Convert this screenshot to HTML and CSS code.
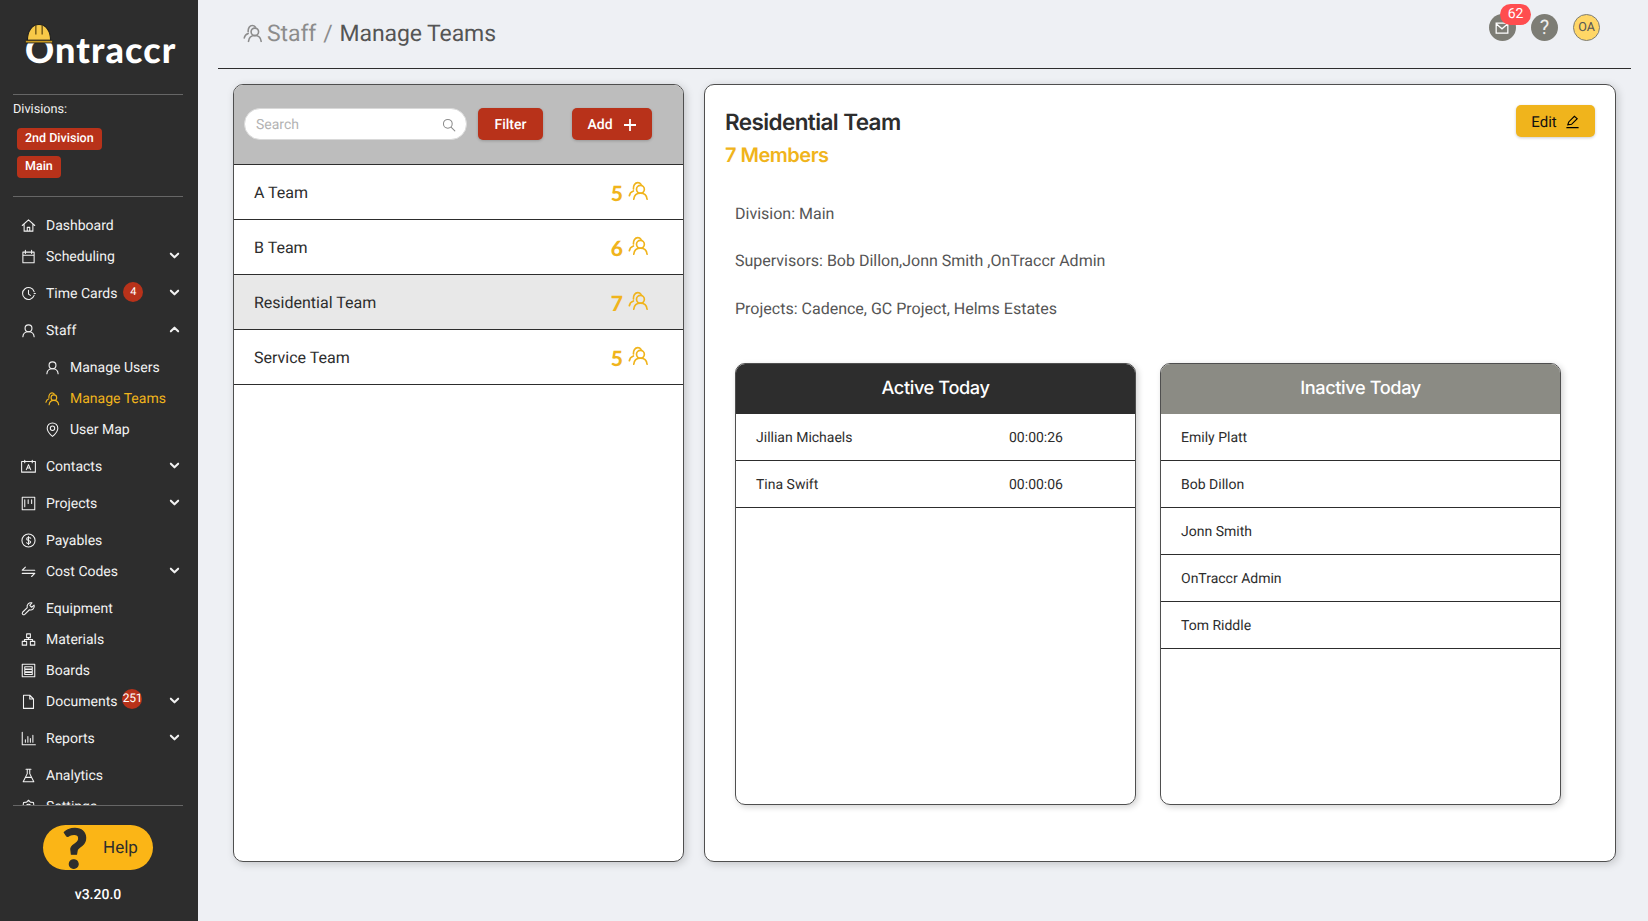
FILE: index.html
```html
<!DOCTYPE html>
<html lang="en">
<head>
<meta charset="utf-8">
<title>Ontraccr - Manage Teams</title>
<link rel="stylesheet" href="styles.css">
</head>
<body>
<svg class="defs" width="0" height="0" aria-hidden="true">
  <symbol id="i-team" viewBox="0 0 24 24" fill="none" stroke="currentColor" stroke-width="1.900" stroke-linecap="round">
    <circle cx="14.200" cy="10.600" r="4.500"/>
    <path d="M6.600 22c.4-4.400 3.200-7 7.600-7s7.200 2.600 7.600 7"/>
    <path d="M6.200 10.300c-.3-4 1.900-7.300 5-7.300 1.500 0 2.800.7 3.700 2"/>
    <path d="M1.500 18c.4-2.600 2-4.500 4.700-5.500"/>
  </symbol>
  <symbol id="i-user" viewBox="0 0 24 24" fill="none" stroke="currentColor" stroke-width="1.800" stroke-linecap="round">
    <circle cx="12" cy="8.500" r="5.500"/>
    <path d="M3 22c.4-5 3.800-8 9-8s8.600 3 9 8"/>
  </symbol>
  <symbol id="i-chev" viewBox="0 0 12 12" fill="none" stroke="currentColor" stroke-width="2.200" stroke-linecap="round" stroke-linejoin="round">
    <path d="M2 4l4 4 4-4"/>
  </symbol>
</svg>
<div class="app">
  <aside class="sidebar">
    <div class="logo">
      <svg class="helmet" viewBox="0 0 28 20" aria-hidden="true">
        <path d="M3 16.500C3 7.500 7.500 1.500 14 1.500S25 7.500 25 16.500z" fill="#f7c948" stroke="#1f1f1f" stroke-width="1"/>
        <path d="M11 2v9M17 2v9" stroke="#5f4a12" stroke-width="1.200"/>
        <path d="M1 16.500h26v2.500H1z" fill="#c89a22" stroke="#1f1f1f" stroke-width=".8"/>
      </svg>
      <span class="logo-text">Ontraccr</span>
    </div>
    <div class="divisions">
      <div class="divisions-label">Divisions:</div>
      <span class="tag">2nd Division</span>
      <span class="tag">Main</span>
    </div>
    <nav class="nav">
      <a class="item"><svg class="ico" viewBox="0 0 24 24"><path d="M2 12 12 3l10 9M5 10v11h14V10M10 21v-6h4v6"/></svg><span>Dashboard</span></a>
      <a class="item sub"><svg class="ico" viewBox="0 0 24 24"><path d="M3 5h18v17H3zM3 10h18M7 2v5M17 2v5"/></svg><span>Scheduling</span><svg class="chev"><use href="#i-chev"/></svg></a>
      <a class="item sub"><svg class="ico" viewBox="0 0 24 24"><path d="M21 9a9.500 9.500 0 1 0 0 6M12 7v6l3 2M21 12h2"/></svg><span>Time Cards</span><b class="count">4</b><svg class="chev"><use href="#i-chev"/></svg></a>
      <a class="item sub"><svg class="ico"><use href="#i-user"/></svg><span>Staff</span><svg class="chev up"><use href="#i-chev"/></svg></a>
      <div class="submenu">
        <a class="item child"><svg class="ico"><use href="#i-user"/></svg><span>Manage Users</span></a>
        <a class="item child active"><svg class="ico"><use href="#i-team"/></svg><span>Manage Teams</span></a>
        <a class="item child"><svg class="ico" viewBox="0 0 24 24"><path d="M12 23C6 18 3.500 14 3.500 10a8.500 8.500 0 0 1 17 0c0 4-2.500 8-8.500 13z"/><circle cx="12" cy="10" r="3.500"/></svg><span>User Map</span></a>
      </div>
      <a class="item sub"><svg class="ico" viewBox="0 0 24 24"><path d="M1 4h22v17H1zM6 2v4M18 2v4M8.500 17 12 9l3.500 8M10 14.500h4"/></svg><span>Contacts</span><svg class="chev"><use href="#i-chev"/></svg></a>
      <a class="item sub"><svg class="ico" viewBox="0 0 24 24"><path d="M2 2h20v20H2zM6 6v11M11.500 6v6M17 6v6"/></svg><span>Projects</span><svg class="chev"><use href="#i-chev"/></svg></a>
      <a class="item"><svg class="ico" viewBox="0 0 24 24"><circle cx="12" cy="12" r="10.500"/><path d="M15.500 8.500c-1-1.500-6.500-2-6.500 1s6.500 2 6.500 5-5.500 2.500-6.500 1M12 5.500v13"/></svg><span>Payables</span></a>
      <a class="item sub"><svg class="ico" viewBox="0 0 24 24"><path d="M2 10h20M7 5l-5 5M2 15h20M17 20l5-5"/></svg><span>Cost Codes</span><svg class="chev"><use href="#i-chev"/></svg></a>
      <a class="item"><svg class="ico" viewBox="0 0 24 24"><path d="M21 6.500 17 10l-3-3 3.500-4a6 6 0 0 0-7.500 7.500L2.500 18a2.500 2.500 0 0 0 3.500 3.500l7.500-7.500A6 6 0 0 0 21 6.500z"/></svg><span>Equipment</span></a>
      <a class="item"><svg class="ico" viewBox="0 0 24 24"><path d="M9 3h6v6H9zM2 15h7v6H2zM15 15h7v6h-7zM12 9v3M5.500 15v-3h13v3"/></svg><span>Materials</span></a>
      <a class="item"><svg class="ico" viewBox="0 0 24 24"><path d="M2 2h20v20H2zM6 6h12v3.500H6zM6 10.500h12V14H6zM6 15h12v3.500H6z"/></svg><span>Boards</span></a>
      <a class="item sub"><svg class="ico" viewBox="0 0 24 24"><path d="M4 2h10l6 6v15H4zM14 2v6h6"/></svg><span>Documents</span><b class="count high">251</b><svg class="chev"><use href="#i-chev"/></svg></a>
      <a class="item sub"><svg class="ico" viewBox="0 0 24 24"><path d="M2 2v20h21M7 18v-4M11 18V9M15 18v-6M19 18V7"/></svg><span>Reports</span><svg class="chev"><use href="#i-chev"/></svg></a>
      <a class="item"><svg class="ico" viewBox="0 0 24 24"><path d="M8 2h8M10 2v7L3.500 22h17L14 9V2M7 15h10"/></svg><span>Analytics</span></a>
      <a class="item"><svg class="ico" viewBox="0 0 24 24"><circle cx="12" cy="12" r="3.500"/><path d="M12 2l3 3 5 .5.500 4.500 2 2-2 2-.5 4.500-5 .5-3 3-3-3-5-.5L3.500 14l-2-2 2-2L4 5.500 9 5z"/></svg><span>Settings</span></a>
    </nav>
    <div class="side-foot">
      <button class="help"><span class="help-q">?</span><span>Help</span></button>
      <div class="version">v3.20.0</div>
    </div>
  </aside>
  <main class="main">
    <header class="topbar">
      <div class="crumbs">
        <svg class="crumb-ico"><use href="#i-team"/></svg>
        <span class="crumb">Staff</span>
        <span class="crumb slash">/</span>
        <span class="crumb current">Manage Teams</span>
      </div>
      <div class="top-icons">
        <div class="round mail">
          <svg viewBox="0 0 24 24" fill="none" stroke="#fff" stroke-width="1.500"><path d="M5 6h14v12H5zM5 7l7 6 7-6"/></svg>
          <span class="mail-badge">62</span>
        </div>
        <div class="round">?</div>
        <div class="round avatar">OA</div>
      </div>
    </header>
    <div class="content">
      <section class="panel list-panel">
        <div class="list-head">
          <div class="search"><span>Search</span>
            <svg viewBox="0 0 24 24" fill="none" stroke="#8c8c8c" stroke-width="1.800" stroke-linecap="round"><circle cx="10" cy="10" r="7.500"/><path d="M15.500 15.500 22 22"/></svg>
          </div>
          <button class="btn red filter">Filter</button>
          <button class="btn red add">Add<svg viewBox="0 0 14 14" stroke="#fff" stroke-width="1.800"><path d="M7 1v12M1 7h12"/></svg></button>
        </div>
        <div class="team"><span>A Team</span><span class="num">5</span><svg class="team-ico"><use href="#i-team"/></svg></div>
        <div class="team"><span>B Team</span><span class="num">6</span><svg class="team-ico"><use href="#i-team"/></svg></div>
        <div class="team selected"><span>Residential Team</span><span class="num">7</span><svg class="team-ico"><use href="#i-team"/></svg></div>
        <div class="team"><span>Service Team</span><span class="num">5</span><svg class="team-ico"><use href="#i-team"/></svg></div>
      </section>
      <section class="panel detail">
        <div class="detail-head">
          <div>
            <h1>Residential Team</h1>
            <h2>7 Members</h2>
          </div>
          <button class="btn edit">Edit<svg viewBox="0 0 16 16" fill="none" stroke="#000" stroke-width="1.200"><path d="M3 11.500 4 8.500 10 2.500 13 5 7 11zM1.500 14.500h13"/></svg></button>
        </div>
        <div class="facts">
          <p>Division: Main</p>
          <p>Supervisors: Bob Dillon,Jonn Smith ,OnTraccr Admin</p>
          <p>Projects: Cadence, GC Project, Helms Estates</p>
        </div>
        <div class="cards">
          <div class="card">
            <div class="card-head">Active Today</div>
            <div class="card-row"><span class="who">Jillian Michaels</span><span>00:00:26</span></div>
            <div class="card-row"><span class="who">Tina Swift</span><span>00:00:06</span></div>
          </div>
          <div class="card">
            <div class="card-head grey">Inactive Today</div>
            <div class="card-row"><span class="who">Emily Platt</span></div>
            <div class="card-row"><span class="who">Bob Dillon</span></div>
            <div class="card-row"><span class="who">Jonn Smith</span></div>
            <div class="card-row"><span class="who">OnTraccr Admin</span></div>
            <div class="card-row"><span class="who">Tom Riddle</span></div>
          </div>
        </div>
      </section>
    </div>
  </main>
</div>
</body>
</html>
```

FILE: styles.css
```css
* { box-sizing: border-box; }
html, body { margin: 0; height: 100%; }
body { font-family: Roboto, "Liberation Sans", sans-serif; background: #eef0f4; color: #2d2d2d; overflow: hidden; text-rendering: geometricPrecision; }
.defs { position: absolute; }
button { font-family: inherit; border: 0; cursor: pointer; text-rendering: geometricPrecision; }
p, h1, h2 { margin: 0; }

.app { display: grid; grid-template-columns: 198px 1fr; height: 921px; }

/* Sidebar */
.sidebar { background: #2d2d2d; color: #f2f2f2; display: flex; flex-direction: column; height: 921px; overflow: hidden; }
.logo { position: relative; height: 95px; margin: 0 15px 0 13px; border-bottom: 1px solid #666; padding: 27px 0 0 12px; }
.logo-text { display: block; font-family: Lato, sans-serif; font-weight: 900; font-size: 36px; line-height: 44px; color: #fff; letter-spacing: 1.100px; }
.helmet { position: absolute; left: 11px; top: 23px; width: 30px; height: 21px; }
.divisions { height: 102px; margin: 0 15px 0 13px; border-bottom: 1px solid #666; padding-top: 7px; display: flex; flex-direction: column; align-items: flex-start; }
.divisions-label { font-size: 12.700px; line-height: 16px; margin-bottom: 10px; }
.tag { margin: 0 0 6px 4px; background: #b8321a; color: #fff; font-size: 12.500px; font-weight: 500; height: 22px; line-height: 22px; padding: 0 8px; border-radius: 4px; }

.nav { flex: 1; min-height: 0; overflow: hidden; padding-top: 13px; border-bottom: 1px solid #666; margin: 0 15px 0 13px; }
.item { display: flex; align-items: center; height: 31px; padding-left: 8px; font-size: 14px; color: #f2f2f2; position: relative; }
.item.sub { margin-bottom: 6px; }
.submenu { margin-bottom: 6px; }
.item.child { padding-left: 32px; }
.item.active { color: #f0b41c; }
.ico { width: 15px; height: 15px; margin-right: 10px; flex: none; fill: none; stroke: currentColor; stroke-width: 1.700; stroke-linejoin: round; stroke-linecap: round; }
.chev { position: absolute; right: 3px; top: 9px; width: 11px; height: 11px; color: #f2f2f2; }
.chev.up { transform: rotate(180deg); }
.count { width: 20px; height: 20px; border-radius: 50%; background: #b8321a; color: #fff; font-size: 11px; font-weight: 400; text-align: center; line-height: 20px; margin: -4px 0 0 6px; }
.count.high { font-size: 12px; letter-spacing: -.3px; margin-left: 5px; margin-top: -5px; line-height: 19px; }

.side-foot { height: 115px; display: flex; flex-direction: column; align-items: center; padding: 19px 2px 0 0; }
.help { width: 110px; height: 45px; border-radius: 23px; background: #fbb516; color: #2d2d2d; font-size: 17px; display: flex; align-items: center; padding: 0 0 0 18px; gap: 14px; }
.help-q { font-family: Lato, sans-serif; font-weight: 900; font-size: 54px; line-height: 45px; width: 28px; -webkit-text-stroke: 1.200px #2d2d2d; }
.version { margin-top: 17px; font-size: 14px; font-weight: 500; color: #fff; line-height: 16px; }

/* Main */
.main { display: flex; flex-direction: column; min-width: 0; padding-left: 20px; padding-right: 17px; }
.topbar { height: 69px; border-bottom: 1px solid #2d2d2d; display: flex; justify-content: space-between; padding: 0 31px 0 25px; }
.crumbs { display: flex; align-items: center; height: 66px; font-size: 23px; }
.crumb-ico { width: 20px; height: 20px; color: #8c8c8c; margin-right: 4px; }
.crumb { color: #8c8c8c; letter-spacing: -.1px; }
.slash { margin: 0 7px; }
.current { color: #555; }
.top-icons { display: flex; gap: 15px; padding-top: 14px; align-items: flex-start; }
.round { width: 27px; height: 27px; border-radius: 50%; background: #7d7d75; color: #eee; font-size: 20px; line-height: 27px; text-align: center; position: relative; }
.round svg { width: 20px; height: 20px; margin-top: 4px; display: block; margin-left: 3px; }
.avatar { background: #ffd666; color: #555; border: 1px solid #7d7d75; font-size: 12.500px; line-height: 25px; }
.mail-badge { position: absolute; left: 11px; top: -10px; width: 31px; height: 21px; border-radius: 11px; background: #ff4d4f; color: #fff; font-size: 14px; line-height: 21px; }

.content { display: flex; gap: 20px; padding: 15px 0 0 15px; }
.panel { height: 778px; background: #fff; border: 1px solid #4f4f4f; border-radius: 10px; box-shadow: 2px 2px 8px rgba(0,0,0,.18); overflow: hidden; }
.list-panel { width: 451px; flex: none; }
.list-head { height: 80px; background: #bdbdbd; border-bottom: 1px solid #2d2d2d; display: flex; align-items: flex-start; padding: 23px 0 0 10px; }
.search { width: 223px; height: 32px; border-radius: 16px; background: #fff; border: 1px solid #d9d9d9; display: flex; align-items: center; justify-content: space-between; padding: 1px 10px 0 11px; font-size: 14px; color: #b3b3b3; }
.search svg { width: 14px; height: 14px; }
.btn { height: 32px; padding: 1px 0 0; border-radius: 5px; font-size: 14px; font-weight: 500; display: flex; align-items: center; justify-content: center; box-shadow: 0 1px 3px rgba(0,0,0,.2); }
.red { background: #b8321a; color: #fff; }
.filter { width: 65px; margin-left: 11px; }
.add { width: 80px; margin-left: 29px; gap: 10px; }
.add svg { width: 14px; height: 14px; }
.team { height: 55px; border-bottom: 1px solid #2d2d2d; display: flex; align-items: center; padding: 0 0 0 20px; font-size: 16px; }
.team > span:first-child { flex: 1; }
.selected { background: #e8e8e8; }
.num { font-family: Lato, sans-serif; font-weight: 900; font-size: 21px; color: #f0b41c; margin-top: 2px; }
.team-ico { width: 21px; height: 21px; color: #f0b41c; margin: -3px 34px 0 5px; }

.detail { flex: none; width: 912px; padding: 20px 20px 0 20px; }
.detail-head { display: flex; justify-content: space-between; align-items: flex-start; }
h1 { font-family: Inter, sans-serif; font-size: 22.500px; font-weight: 600; line-height: 36px; color: #2d2d2d; letter-spacing: -.6px; }
h2 { font-family: Inter, sans-serif; font-size: 20px; font-weight: 600; line-height: 28px; color: #f0b41c; letter-spacing: -.5px; }
.edit { width: 79px; background: #f0b41c; color: #111; font-size: 15px; font-weight: 400; gap: 8px; }
.edit svg { width: 15px; height: 15px; }
.facts { padding: 32.700px 0 0 10px; display: flex; flex-direction: column; gap: 24px; font-size: 16px; line-height: 23.500px; color: #555; }
.cards { display: flex; gap: 24px; padding: 43.300px 0 0 10px; }
.card { width: 401px; height: 442px; border: 1px solid #4f4f4f; border-radius: 10px; overflow: hidden; box-shadow: 2px 2px 6px rgba(0,0,0,.18); }
.card-head { height: 50px; background: #2d2d2d; color: #fff; font-family: Inter, sans-serif; font-weight: 500; font-size: 18.200px; line-height: 49px; letter-spacing: -.4px; text-align: center; }
.card-head.grey { background: #8b8b84; }
.card-row { height: 47px; padding-top: 1px; border-bottom: 1px solid #2d2d2d; display: flex; align-items: center; padding-left: 20px; font-size: 14px; }
.who { width: 253px; }
```
